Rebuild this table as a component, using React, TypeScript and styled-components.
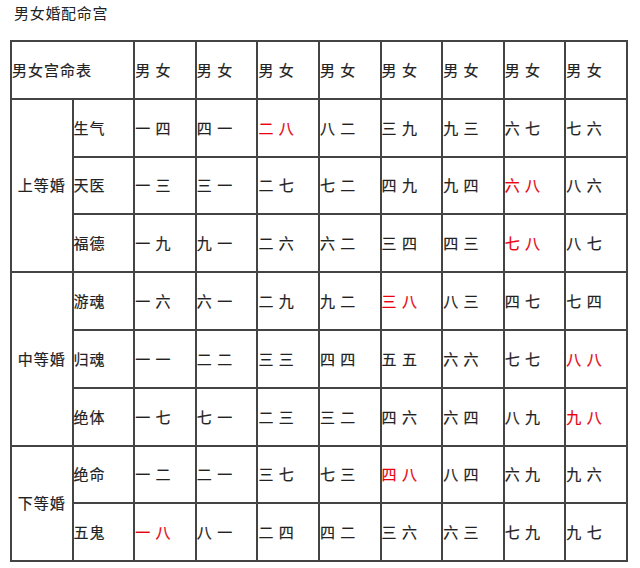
import React from "react";
import styled, { createGlobalStyle } from "styled-components";

const GlobalStyle = createGlobalStyle`
  html, body {
    margin: 0;
    padding: 0;
    background: #fff;
  }
  body {
    font-family: "Noto Sans CJK SC", "Noto Sans", sans-serif;
    color: #222;
  }
`;

const Page = styled.div`
  padding: 3px 0 0 10px;
`;

const Title = styled.div`
  padding-left: 4px;
  font-size: 15px;
  line-height: 20px;
  letter-spacing: 0.7px;
  color: #222;
`;

const Table = styled.table`
  margin-top: 17px;
  width: 618px;
  table-layout: fixed;
  border-collapse: collapse;
  border: 2px solid #444;
  font-size: 15px;
  letter-spacing: 1px;
`;

const Row = styled.tr`
  height: 57.8px;
`;

const Cell = styled.td<{ $center?: boolean; $red?: boolean }>`
  border: 2px solid #444;
  padding: 0;
  text-align: ${(p) => (p.$center ? "center" : "left")};
  vertical-align: middle;
  white-space: nowrap;
  color: ${(p) => (p.$red ? "#e8000f" : "#222")};
  line-height: 20px;
  -webkit-text-stroke: 0.2px currentColor;
`;

type Pair = [string, boolean?];

interface Palace {
  name: string;
  pairs: Pair[];
}

interface Group {
  label: string;
  palaces: Palace[];
}

const groups: Group[] = [
  {
    label: "上等婚",
    palaces: [
      { name: "生气", pairs: [["一 四"], ["四 一"], ["二 八", true], ["八 二"], ["三 九"], ["九 三"], ["六 七"], ["七 六"]] },
      { name: "天医", pairs: [["一 三"], ["三 一"], ["二 七"], ["七 二"], ["四 九"], ["九 四"], ["六 八", true], ["八 六"]] },
      { name: "福德", pairs: [["一 九"], ["九 一"], ["二 六"], ["六 二"], ["三 四"], ["四 三"], ["七 八", true], ["八 七"]] },
    ],
  },
  {
    label: "中等婚",
    palaces: [
      { name: "游魂", pairs: [["一 六"], ["六 一"], ["二 九"], ["九 二"], ["三 八", true], ["八 三"], ["四 七"], ["七 四"]] },
      { name: "归魂", pairs: [["一 一"], ["二 二"], ["三 三"], ["四 四"], ["五 五"], ["六 六"], ["七 七"], ["八 八", true]] },
      { name: "绝体", pairs: [["一 七"], ["七 一"], ["二 三"], ["三 二"], ["四 六"], ["六 四"], ["八 九"], ["九 八", true]] },
    ],
  },
  {
    label: "下等婚",
    palaces: [
      { name: "绝命", pairs: [["一 二"], ["二 一"], ["三 七"], ["七 三"], ["四 八", true], ["八 四"], ["六 九"], ["九 六"]] },
      { name: "五鬼", pairs: [["一 八", true], ["八 一"], ["二 四"], ["四 二"], ["三 六"], ["六 三"], ["七 九"], ["九 七"]] },
    ],
  },
];

export default function App() {
  return (
    <Page>
      <GlobalStyle />
      <Title>男女婚配命宫</Title>
      <Table>
        <colgroup>
          {Array.from({ length: 10 }).map((_, i) => (
            <col key={i} />
          ))}
        </colgroup>
        <tbody>
          <Row>
            <Cell colSpan={2}>男女宫命表</Cell>
            {Array.from({ length: 8 }).map((_, i) => (
              <Cell key={i}>男 女</Cell>
            ))}
          </Row>
          {groups.map((g) =>
            g.palaces.map((p, idx) => (
              <Row key={p.name}>
                {idx === 0 && (
                  <Cell rowSpan={g.palaces.length} $center>
                    {g.label}
                  </Cell>
                )}
                <Cell>{p.name}</Cell>
                {p.pairs.map(([text, red], i) => (
                  <Cell key={i} $red={!!red}>
                    {text}
                  </Cell>
                ))}
              </Row>
            ))
          )}
        </tbody>
      </Table>
    </Page>
  );
}
